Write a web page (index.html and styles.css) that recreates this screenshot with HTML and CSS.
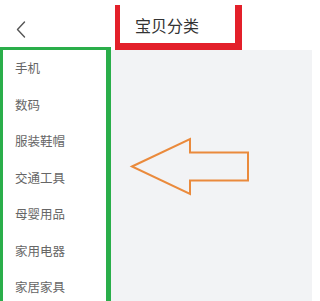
FILE: index.html
```html
<!DOCTYPE html>
<html lang="zh">
<head>
<meta charset="utf-8">
<title>宝贝分类</title>
<link rel="stylesheet" href="styles.css">
</head>
<body>
<div class="page">
  <header class="header">
    <div class="back">
      <svg width="10" height="17" viewBox="0 0 10 17"><polyline points="8.5,1 1.5,8.5 8.5,16" fill="none" stroke="#555" stroke-width="1.4" stroke-linecap="round" stroke-linejoin="round"/></svg>
    </div>
    <div class="title">宝贝分类</div>
  </header>
  <div class="body">
    <nav class="sidebar">
      <div class="item">手机</div>
      <div class="item">数码</div>
      <div class="item">服装鞋帽</div>
      <div class="item">交通工具</div>
      <div class="item">母婴用品</div>
      <div class="item">家用电器</div>
      <div class="item">家居家具</div>
    </nav>
    <main class="content"></main>
  </div>
  <div class="green-mark"></div>
  <svg class="arrow" width="312" height="301" viewBox="0 0 312 301">
    <polygon points="132,166.5 190,139 190,152.5 248,152.5 248,180.5 190,180.5 190,194" fill="none" stroke="#ea8a3c" stroke-width="2" stroke-linejoin="miter"/>
  </svg>
</div>
</body>
</html>
```

FILE: styles.css
```css
html, body {
  margin: 0;
  padding: 0;
  background: #ffffff;
}
body {
  font-family: "Noto Sans CJK SC", "Noto Sans", sans-serif;
}
.page {
  position: relative;
  width: 312px;
  height: 301px;
  overflow: hidden;
  display: flex;
  flex-direction: column;
}
.header {
  height: 50px;
  flex: none;
  display: flex;
  align-items: flex-start;
  background: #ffffff;
}
.back {
  width: 115px;
  height: 50px;
  display: flex;
  align-items: center;
  padding-left: 16px;
  box-sizing: border-box;
  padding-top: 8px;
}
.title {
  margin-top: 5px;
  width: 127px;
  height: 45px;
  box-sizing: border-box;
  border-left: 5px solid #e3202a;
  border-right: 7px solid #e3202a;
  border-bottom: 7px solid #e3202a;
  padding-left: 15px;
  padding-top: 10px;
  font-size: 16px;
  line-height: 20px;
  color: #333333;
}
.body {
  flex: 1;
  display: flex;
}
.sidebar {
  width: 111px;
  flex: none;
  background: #ffffff;
  padding-left: 15px;
  box-sizing: border-box;
}
.item {
  height: 36.5px;
  line-height: 36.5px;
  font-size: 12.5px;
  color: #666666;
}
.content {
  flex: 1;
  background: #f2f3f5;
}
.green-mark {
  position: absolute;
  left: 0;
  top: 47px;
  width: 111px;
  height: 270px;
  box-sizing: border-box;
  border-left: 3px solid #2aae4a;
  border-top: 3px solid #2aae4a;
  border-right: 5px solid #2aae4a;
  pointer-events: none;
}
.arrow {
  position: absolute;
  left: 0;
  top: 0;
  pointer-events: none;
}
```
